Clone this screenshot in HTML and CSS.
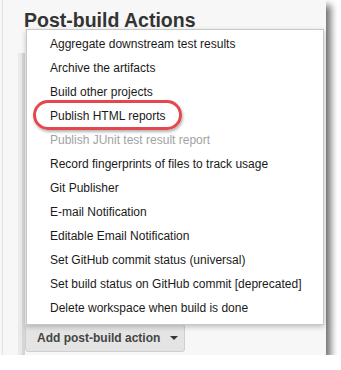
FILE: index.html
```html
<!DOCTYPE html>
<html>
<head>
  <meta charset="UTF-8" />
  <title>Post-build Actions</title>
  <link rel="stylesheet" href="styles.css">
</head>
<body>

  <div class="frame">
    <div class="page">
      <h2 class="section-title">Post-build Actions</h2>

      <div class="section">
        <div class="section-inner">
          <div class="section-body"></div>
          <button class="add-btn">Add post-build action <span class="caret"></span></button>
        </div>
      </div>
    </div>

    <!-- Dropdown menu (open) -->
    <ul class="menu">
      <li>Aggregate downstream test results</li>
      <li>Archive the artifacts</li>
      <li>Build other projects</li>
      <li class="marked">Publish HTML reports<span class="callout"></span></li>
      <li class="disabled">Publish JUnit test result report</li>
      <li>Record fingerprints of files to track usage</li>
      <li>Git Publisher</li>
      <li>E-mail Notification</li>
      <li>Editable Email Notification</li>
      <li>Set GitHub commit status (universal)</li>
      <li>Set build status on GitHub commit [deprecated]</li>
      <li>Delete workspace when build is done</li>
    </ul>
  </div>

</body>
</html>
```

FILE: styles.css
```css
body {
  margin: 0;
  background: #fff;
  font-family: "Liberation Sans", Arial, sans-serif;
  color: #1a1a1a;
}

.frame {
  position: relative;
  width: 326px;
  height: 355px;
  background: #f7f7f7;
  box-shadow: 5px 5px 7px rgba(0, 0, 0, 0.55);
}

.page {
  height: 100%;
  margin-left: 2px;
  border-left: 1px solid #e2e2e2;
  display: flex;
  flex-direction: column;
}

.section-title {
  margin: 0;
  padding: 8px 0 0 21px;
  height: 24px;
  line-height: 24px;
  font-size: 19.5px;
  font-weight: bold;
  color: #333;
}

.section {
  flex: 1;
  margin: 21px 0 0 15px;
  border-left: 4px solid #e9e9e9;
}

.section-inner {
  height: 100%;
  border-left: 3px solid #d5d5d5;
}

.section-body {
  height: 271px;
}

.add-btn {
  display: flex;
  align-items: center;
  gap: 10px;
  width: 160px;
  height: 28px;
  padding: 0 0 0 11px;
  background: #e4e4e4;
  border: 1px solid #cfcfcf;
  border-radius: 3px;
  font-family: inherit;
  font-size: 12px;
  font-weight: bold;
  color: #444;
}

.caret {
  width: 0;
  height: 0;
  border-left: 4px solid transparent;
  border-right: 4px solid transparent;
  border-top: 4px solid #333;
}

/* Dropdown */
.menu {
  position: absolute;
  left: 26px;
  top: 29px;
  width: 296px;
  margin: 0;
  padding: 2px 0 4px;
  list-style: none;
  background: #fff;
  border: 1px solid #c8c8c8;
  box-shadow: 0 2px 5px rgba(0, 0, 0, 0.22);
}

.menu li {
  height: 24px;
  line-height: 24px;
  padding-left: 23px;
  font-size: 12px;
  white-space: nowrap;
}

.menu li.disabled {
  color: #a2a2a2;
}

.menu li.marked {
  position: relative;
}

.callout {
  position: absolute;
  left: 6px;
  top: -4px;
  width: 149px;
  height: 30px;
  box-sizing: border-box;
  border: 3px solid #e5474e;
  border-radius: 15px;
  box-shadow: 1px 2px 3px rgba(0, 0, 0, 0.3);
}
```
